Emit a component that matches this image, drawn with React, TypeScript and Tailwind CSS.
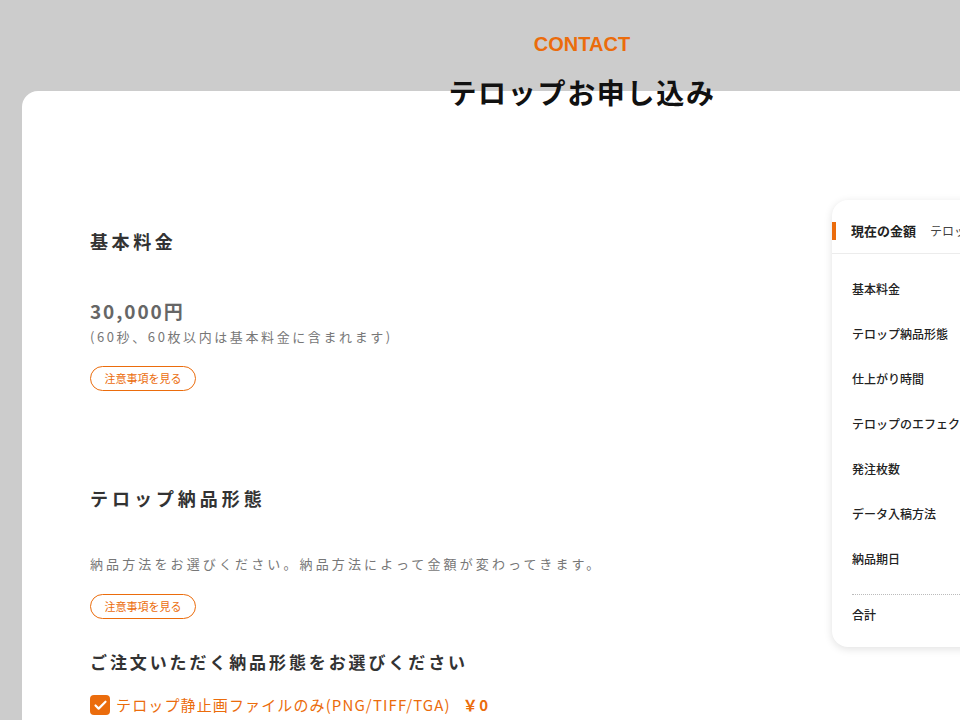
import { Check } from "lucide-react";

const jp = "font-['Noto_Sans_CJK_JP','Noto_Sans',sans-serif]";

const NoticeButton = () => (
  <button className="flex h-[25px] w-[106px] items-center justify-center rounded-full border border-[#eb6c0c] text-[11px] text-[#eb6c0c]">
    注意事項を見る
  </button>
);

const summaryItems = [
  "基本料金",
  "テロップ納品形態",
  "仕上がり時間",
  "テロップのエフェクト",
  "発注枚数",
  "データ入稿方法",
  "納品期日",
];

const Summary = () => (
  <aside className="w-[310px] shrink-0 self-start rounded-2xl bg-white pb-[12px] shadow-[0_2px_8px_rgba(0,0,0,0.12)]">
    <div className="flex h-[54px] items-center gap-[10px] border-b border-[#ececec] pt-[8px]">
      <span className="h-[18px] w-[4px] bg-[#eb6c0c]" />
      <span className="pl-[5px] text-[13px] font-bold text-[#222]">現在の金額</span>
      <span className="pl-[4px] text-[12px] text-[#444]">テロップお申し込み</span>
    </div>
    <ul className="px-[20px] pt-[12px]">
      {summaryItems.map((item) => (
        <li key={item} className="flex h-[45px] items-center text-[12px] font-medium text-[#222]">
          {item}
        </li>
      ))}
    </ul>
    <div className="mx-[20px] mt-[13px] border-t border-dotted border-[#bbb]" />
    <div className="flex h-[40px] items-center px-[20px] text-[12px] font-medium text-[#222]">合計</div>
  </aside>
);

export default function App() {
  return (
    <div className={`min-h-screen w-[1164px] bg-[#cccccc] ${jp}`}>
      <header className="flex flex-col items-center pt-[31px]">
        <p className="font-['Liberation_Sans',sans-serif] text-[20px] font-bold leading-[26px] text-[#eb6c0c]">CONTACT</p>
        <h1 className="relative z-10 mt-[15px] text-[28px] font-bold leading-[40px] tracking-[0.06em] text-[#111]">
          テロップお申し込み
        </h1>
      </header>
      <main className="mx-[22px] -mt-[21px] flex min-h-[700px] gap-[10px] rounded-2xl bg-white pl-[68px] pt-[109px]">
        <div className="flex-1">
          <section className="pt-[28px]">
            <h2 className="text-[18px] font-bold leading-[26px] tracking-[0.2em] text-[#333]">基本料金</h2>
            <p className="mt-[43px] text-[19px] font-bold leading-[28px] tracking-[0.1em] text-[#666]">30,000円</p>
            <p className="mt-[2px] text-[13px] leading-[20px] tracking-[0.2em] text-[#777]">(60秒、60枚以内は基本料金に含まれます)</p>
            <div className="mt-[19px]">
              <NoticeButton />
            </div>
          </section>
          <section className="mt-[94px]">
            <h2 className="text-[18px] font-bold leading-[26px] tracking-[0.22em] text-[#333]">テロップ納品形態</h2>
            <p className="mt-[43px] text-[13px] leading-[20px] tracking-[0.24em] text-[#777]">
              納品方法をお選びください。納品方法によって金額が変わってきます。
            </p>
            <div className="mt-[20px]">
              <NoticeButton />
            </div>
            <h3 className="mt-[30px] text-[17px] font-bold leading-[26px] tracking-[0.17em] text-[#333]">
              ご注文いただく納品形態をお選びください
            </h3>
            <label className="mt-[19px] flex items-center gap-[6px]">
              <span className="flex h-[20px] w-[20px] items-center justify-center rounded-[4px] bg-[#eb6c0c]">
                <Check size={15} strokeWidth={3.5} className="text-white" />
              </span>
              <span className="text-[15px] leading-[22px] tracking-[0.075em] text-[#eb6c0c]">
                テロップ静止画ファイルのみ(PNG/TIFF/TGA)
                <span className="ml-[12px] font-bold tracking-[0.1em]">￥0</span>
              </span>
            </label>
          </section>
        </div>
        <Summary />
      </main>
    </div>
  );
}
